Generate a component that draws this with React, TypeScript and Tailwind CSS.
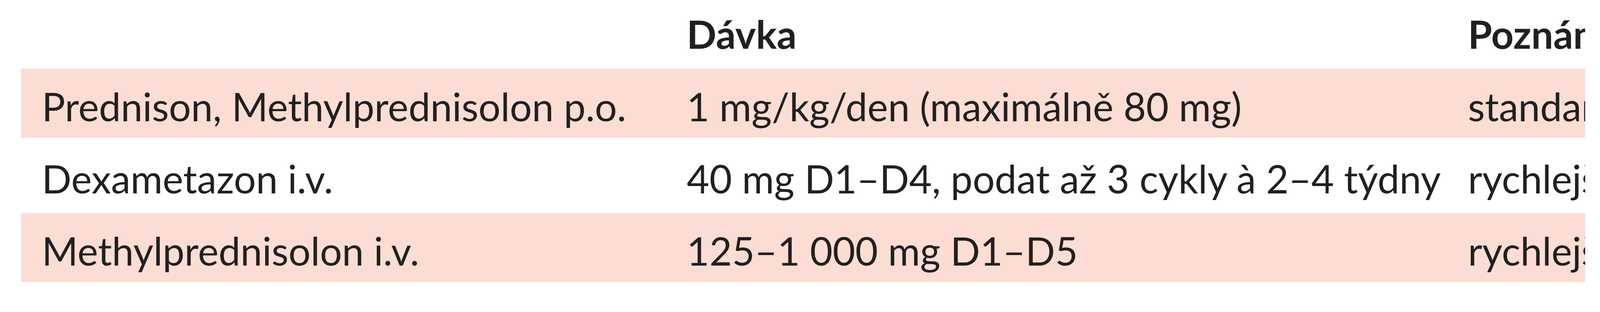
const rows = [
  {
    lek: 'Prednison, Methylprednisolon p.o.',
    davka: '1 mg/kg/den (maximálně 80 mg)',
    pozn: 'standardní podání pro jinak nekomplikované pacienty',
    pink: true,
  },
  {
    lek: 'Dexametazon i.v.',
    davka: '40 mg D1–D4, podat až 3 cykly à 2–4 týdny',
    pozn: 'rychlejší nástup odpovědi',
    pink: false,
  },
  {
    lek: 'Methylprednisolon i.v.',
    davka: '125–1 000 mg D1–D5',
    pozn: 'rychlejší nástup odpovědi, preference u urgentních stavů',
    pink: true,
  },
];

const cols = 'grid grid-cols-[1651px_2000px_minmax(0,1fr)]';

export default function App() {
  return (
    <div className="w-full h-[800px] overflow-hidden bg-white pl-[54px] pr-[38px] font-['Lato','Liberation_Sans',sans-serif] text-[100px] leading-none text-[#231f20] whitespace-nowrap">
      <div className={`${cols} h-[172px] font-bold`}>
        <div className="pl-[53px] pt-[36px]"></div>
        <div className="pl-[53px] pt-[36px]">Dávka</div>
        <div className="pl-[53px] pt-[36px] overflow-hidden">Poznámka</div>
      </div>
      {rows.map((r) => (
        <div key={r.lek} className="py-[4px]">
          <div className={`${cols} h-[177px] ${r.pink ? 'bg-[#fbddd3]' : 'bg-white'}`}>
            <div className="pl-[53px] pt-[46px]">{r.lek}</div>
            <div className="pl-[53px] pt-[46px]">{r.davka}</div>
            <div className="pl-[53px] pt-[46px] overflow-hidden">{r.pozn}</div>
          </div>
        </div>
      ))}
    </div>
  );
}
